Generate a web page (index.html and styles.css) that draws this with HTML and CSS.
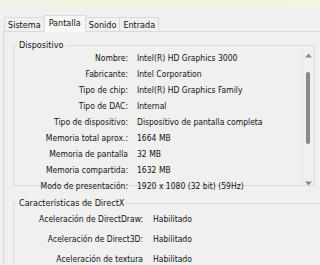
FILE: index.html
```html
<!DOCTYPE html>
<html lang="es">
<head>
<meta charset="utf-8">
<link rel="stylesheet" href="styles.css">
</head>
<body>
<div class="topstrip"></div>
<div class="tabs">
  <div class="tab">Sistema</div>
  <div class="tab active">Pantalla</div>
  <div class="tab">Sonido</div>
  <div class="tab">Entrada</div>
</div>
<div class="panel">
  <fieldset class="group dev">
    <legend>Dispositivo</legend>
    <div class="listbox">
      <div class="rows">
        <div class="row"><span class="lbl">Nombre:</span><span class="val">Intel(R) HD Graphics 3000</span></div>
        <div class="row"><span class="lbl">Fabricante:</span><span class="val">Intel Corporation</span></div>
        <div class="row"><span class="lbl">Tipo de chip:</span><span class="val">Intel(R) HD Graphics Family</span></div>
        <div class="row"><span class="lbl">Tipo de DAC:</span><span class="val">Internal</span></div>
        <div class="row"><span class="lbl">Tipo de dispositivo:</span><span class="val">Dispositivo de pantalla completa</span></div>
        <div class="row"><span class="lbl">Memoria total aprox.:</span><span class="val">1664 MB</span></div>
        <div class="row"><span class="lbl">Memoria de pantalla</span><span class="val">32 MB</span></div>
        <div class="row"><span class="lbl">Memoria compartida:</span><span class="val">1632 MB</span></div>
        <div class="row"><span class="lbl">Modo de presentación:</span><span class="val">1920 x 1080 (32 bit) (59Hz)</span></div>
      </div>
      <div class="scrollbar">
        <svg class="arrow" width="7" height="5" viewBox="0 0 7 5"><path d="M3.5 0.5 L7 4.5 L0 4.5 Z" fill="#8c8c8c"/></svg>
        <div class="thumb"></div>
        <svg class="arrow" width="7" height="5" viewBox="0 0 7 5"><path d="M0 0.5 L7 0.5 L3.5 4.5 Z" fill="#8c8c8c"/></svg>
      </div>
    </div>
  </fieldset>
  <fieldset class="group dx">
    <legend>Características de DirectX</legend>
    <div class="row2"><span class="lbl2">Aceleración de DirectDraw:</span><span class="val">Habilitado</span></div>
    <div class="row2"><span class="lbl2">Aceleración de Direct3D:</span><span class="val">Habilitado</span></div>
    <div class="row2"><span class="lbl2">Aceleración de textura</span><span class="val">Habilitado</span></div>
  </fieldset>
</div>
</body>
</html>
```
FILE: styles.css
```css
html, body {
  margin: 0;
  padding: 0;
  background: #f0f0f0;
  overflow: hidden;
}
body {
  width: 320px;
  height: 265px;
  font-family: "DejaVu Sans Condensed", "DejaVu Sans", sans-serif;
  font-size: 8.5px;
  color: #111;
}
.topstrip {
  height: 7px;
  background: linear-gradient(to right, #eef3e3, #f1f5dd 60%, #f2f5e2);
}
.tabs {
  display: flex;
  align-items: flex-end;
  margin-top: 8px;
  padding-left: 4px;
  height: 16px;
}
.tab {
  height: 14px;
  line-height: 14px;
  padding: 0 3px;
  border: 1px solid #dadada;
  border-bottom: none;
  margin-right: -1px;
  background: #f0f0f0;
  box-sizing: border-box;
  font-size: 9px;
}
.tab.active {
  height: 17px;
  line-height: 15px;
  background: #f9f9f9;
  position: relative;
  z-index: 1;
  margin-bottom: -1px;
  padding: 0 4px;
}
.panel {
  margin-left: 3px;
  border-top: 1px solid #dadada;
  border-left: 1px solid #dadada;
  height: 234px;
  padding: 8px 0 0 9px;
  box-sizing: border-box;
  overflow: hidden;
}
.group {
  margin: 0;
  border: 1px solid #dcdcdc;
  padding: 0;
  min-width: 0;
}
.group legend {
  padding: 0 2px;
  margin-left: 3px;
  font-size: 9px;
  line-height: 10px;
}
.dev {
  width: 302px;
  box-sizing: border-box;
  height: 146px;
}
.listbox {
  display: flex;
  height: 136px;
}
.rows {
  flex: 1;
  padding-top: 0;
}
.row {
  display: flex;
  height: 16px;
  align-items: center;
}
.lbl {
  width: 114px;
  text-align: right;
  margin-right: 9px;
  white-space: nowrap;
}
.val {
  white-space: nowrap;
}
.scrollbar {
  width: 13px;
  border-left: 1px solid #e8e8e8;
  display: flex;
  flex-direction: column;
  align-items: center;
  padding-top: 3px;
  box-sizing: border-box;
}
.thumb {
  width: 4px;
  height: 72px;
  background: #8a8a8a;
  border-radius: 2px;
  margin: 14px 0 37px;
}
.dx {
  margin-top: 12px;
  width: 320px;
  height: 80px;
}
.row2 {
  display: flex;
  height: 20px;
  align-items: center;
}
.row2:first-of-type {
  margin-top: 1px;
}
.lbl2 {
  width: 129px;
  text-align: right;
  margin-right: 10px;
  white-space: nowrap;
}
```
